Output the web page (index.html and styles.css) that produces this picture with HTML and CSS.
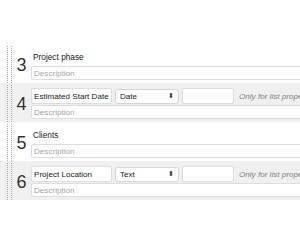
FILE: index.html
```html
<!DOCTYPE html>
<html lang="en">
<head>
    <meta charset="UTF-8">
    <title>Properties</title>
    <link rel="stylesheet" href="styles.css">
</head>
<body>
    <!-- Список свойств -->
    <div class="prop-list">
        <div class="prop-row">
            <div class="handle"></div>
            <div class="num">3</div>
            <div class="fields">
                <div class="line">
                    <span class="prop-label">Project phase</span>
                </div>
                <input class="desc" type="text" placeholder="Description">
            </div>
        </div>

        <div class="prop-row editable">
            <div class="handle"></div>
            <div class="num">4</div>
            <div class="fields">
                <div class="line">
                    <input class="name" type="text" value="Estimated Start Date">
                    <div class="select">Date<span class="arrows">&#x2B0D;</span></div>
                    <input class="values" type="text">
                    <span class="hint">Only for list properties</span>
                </div>
                <input class="desc" type="text" placeholder="Description">
            </div>
        </div>

        <div class="prop-row">
            <div class="handle"></div>
            <div class="num">5</div>
            <div class="fields">
                <div class="line">
                    <span class="prop-label">Clients</span>
                </div>
                <input class="desc" type="text" placeholder="Description">
            </div>
        </div>

        <div class="prop-row editable">
            <div class="handle"></div>
            <div class="num">6</div>
            <div class="fields">
                <div class="line">
                    <input class="name" type="text" value="Project Location">
                    <div class="select">Text<span class="arrows">&#x2B0D;</span></div>
                    <input class="values" type="text">
                    <span class="hint">Only for list properties</span>
                </div>
                <input class="desc" type="text" placeholder="Description">
            </div>
        </div>
    </div>
</body>
</html>
```

FILE: styles.css
```css
/* Общие стили */
body {
    margin: 0;
    padding: 0;
    background-color: #FFFFFF;
    font-family: 'Liberation Sans', Arial, sans-serif;
    color: #222;
    overflow: hidden;
}

.prop-list {
    padding-top: 44px;
    width: 340px;
}

/* Строка */
.prop-row {
    display: flex;
    height: 39px;
}

.prop-row.editable {
    background-color: #F0F0F0;
}

.handle {
    width: 3px;
    margin: 2px 0 0 7px;
    border-left: 1px dotted #AAA;
    border-right: 1px dotted #AAA;
}

.num {
    width: 19px;
    display: flex;
    align-items: center;
    justify-content: center;
    font-size: 18px;
    color: #333;
    padding-top: 3px;
}

.fields {
    flex: 1;
    display: flex;
    flex-direction: column;
    padding: 5px 0 3px 0;
    gap: 1px;
}

.line {
    display: flex;
    align-items: center;
    height: 16px;
    gap: 3px;
}

.prop-label {
    font-size: 8.3px;
    padding-left: 2px;
}

input {
    font-family: inherit;
    font-size: 8.1px;
    color: #222;
    border: 1px solid #DDD;
    border-radius: 2px;
    background: #FFF;
    padding: 0 1px 0 2px;
    margin: 0;
    box-sizing: border-box;
    outline: none;
}

input::placeholder {
    color: #A5A5A5;
}

.name {
    width: 81px;
    height: 16px;
}

.desc {
    width: 100%;
    height: 14px;
}

.select {
    width: 64px;
    height: 15px;
    box-sizing: border-box;
    border: 1px solid #D5D5D5;
    border-radius: 3px;
    background: #FFF;
    font-size: 8.1px;
    display: flex;
    align-items: center;
    justify-content: space-between;
    padding: 0 4px 0 4px;
}

.arrows {
    font-size: 7px;
    color: #333;
}

.values {
    width: 52px;
    height: 16px;
}

.hint {
    font-size: 8.1px;
    font-style: italic;
    color: #808080;
    white-space: nowrap;
    padding-left: 2px;
}
```
